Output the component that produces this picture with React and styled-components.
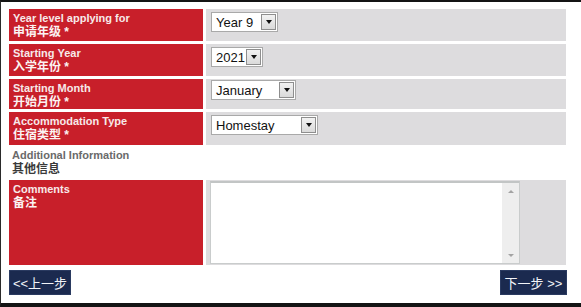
import React from "react";
import styled, { createGlobalStyle } from "styled-components";

const Global = createGlobalStyle`
  html, body { margin: 0; padding: 0; background: #fff; }
  body { font-family: "Liberation Sans", "Noto Sans CJK SC", Arial, sans-serif; }
  * { box-sizing: border-box; }
`;

const Frame = styled.div`
  width: 581px;
  height: 307px;
  border-top: 2px solid #141414;
  border-bottom: 4px solid #141414;
  border-left: 1px solid #2a2a2a;
  padding: 7px 0 0 8px;
  background: #fff;
  overflow: hidden;
`;

const Form = styled.div`
  display: grid;
  grid-template-columns: 194px 360px;
  grid-template-rows: 32px 32px 30px 33px 29px 85px;
  gap: 3px;
`;

const Label = styled.div`
  background: #c81f2a;
  color: #f7e9e9;
  padding: 3px 4px 0 4px;
  font-weight: bold;
  display: flex;
  flex-direction: column;
`;

const En = styled.span`
  font-size: 11px;
  line-height: 13px;
`;

const Zh = styled.span`
  font-size: 12px;
  line-height: 14px;
  color: #fbf3f3;
  font-family: "Liberation Sans", "Noto Sans CJK SC", sans-serif;
`;

const Value = styled.div`
  background: #dddcde;
  padding: ${(p) => p.$pad || "3px 0 0 5px"};
  display: flex;
  align-items: flex-start;
`;

const Section = styled.div`
  grid-column: 1 / -1;
  padding: 1px 3px;
  display: flex;
  flex-direction: column;
  font-weight: bold;
`;

const SectionEn = styled.span`
  font-size: 11px;
  line-height: 13px;
  color: #6a6a6a;
`;

const SectionZh = styled.span`
  font-size: 12px;
  line-height: 14px;
  color: #3a3a3a;
  font-family: "Liberation Sans", "Noto Sans CJK SC", sans-serif;
`;

const SelectBox = styled.div`
  width: ${(p) => p.$w}px;
  height: 20px;
  background: #fff;
  border: 1px solid #a9a9a9;
  display: flex;
  align-items: center;
  justify-content: space-between;
  padding: 0 1px 0 4px;
  font-size: 13px;
  color: #111;
`;

const Arrow = styled.div`
  width: 15px;
  height: 16px;
  border: 1px solid #8e8e8e;
  background: linear-gradient(#f2f2f2, #dadada);
  display: flex;
  align-items: center;
  justify-content: center;
  &::after {
    content: "";
    border-left: 3.5px solid transparent;
    border-right: 3.5px solid transparent;
    border-top: 4px solid #111;
  }
`;

const Select = ({ value, w }) => (
  <SelectBox $w={w}>
    <span>{value}</span>
    <Arrow />
  </SelectBox>
);

const AreaWrap = styled.div`
  width: 310px;
  height: 83px;
  background: #fff;
  border: 1px solid #c9cccc;
  border-top: 2px solid #c2c5c5;
  display: flex;
`;

const Area = styled.textarea`
  flex: 1;
  border: none;
  resize: none;
  outline: none;
  padding: 2px;
  font-family: "Liberation Sans", sans-serif;
  font-size: 13px;
`;

const ScrollBar = styled.div`
  width: 17px;
  background: #eeeeee;
  display: flex;
  flex-direction: column;
  justify-content: space-between;
  align-items: center;
  padding: 7px 0 6px;
`;

const Tri = styled.span`
  border-left: 3px solid transparent;
  border-right: 3px solid transparent;
  ${(p) => (p.$up ? "border-bottom: 3px solid #a3a3a3;" : "border-top: 3px solid #a3a3a3;")}
`;

const Buttons = styled.div`
  width: 558px;
  margin-top: 5px;
  display: flex;
  justify-content: space-between;
`;

const NavButton = styled.button`
  height: 25px;
  width: ${(p) => p.$w}px;
  background: #1b2a4f;
  border: 1px solid #2a3a60;
  color: #f2f4f8;
  font-family: "Liberation Sans", "Noto Sans CJK SC", sans-serif;
  font-size: 13px;
  padding: 0;
  display: flex;
  align-items: center;
  justify-content: center;
  cursor: pointer;
`;

const rows = [
  { en: "Year level applying for", zh: "申请年级 *", value: "Year 9", w: 67 },
  { en: "Starting Year", zh: "入学年份 *", value: "2021", w: 52 },
  { en: "Starting Month", zh: "开始月份 *", value: "January", w: 85, pad: "1px 0 0 5px" },
  { en: "Accommodation Type", zh: "住宿类型 *", value: "Homestay", w: 107 },
];

export default function App() {
  return (
    <>
      <Global />
      <Frame>
        <Form>
          {rows.map((r) => (
            <React.Fragment key={r.en}>
              <Label>
                <En>{r.en}</En>
                <Zh>{r.zh}</Zh>
              </Label>
              <Value $pad={r.pad}>
                <Select value={r.value} w={r.w} />
              </Value>
            </React.Fragment>
          ))}
          <Section>
            <SectionEn>Additional Information</SectionEn>
            <SectionZh>其他信息</SectionZh>
          </Section>
          <Label>
            <En>Comments</En>
            <Zh>备注</Zh>
          </Label>
          <Value $pad="1px 0 0 4px">
            <AreaWrap>
              <Area />
              <ScrollBar>
                <Tri $up />
                <Tri />
              </ScrollBar>
            </AreaWrap>
          </Value>
        </Form>
        <Buttons>
          <NavButton $w={62}>&lt;&lt;上一步</NavButton>
          <NavButton $w={67}>下一步 &gt;&gt;</NavButton>
        </Buttons>
      </Frame>
    </>
  );
}
